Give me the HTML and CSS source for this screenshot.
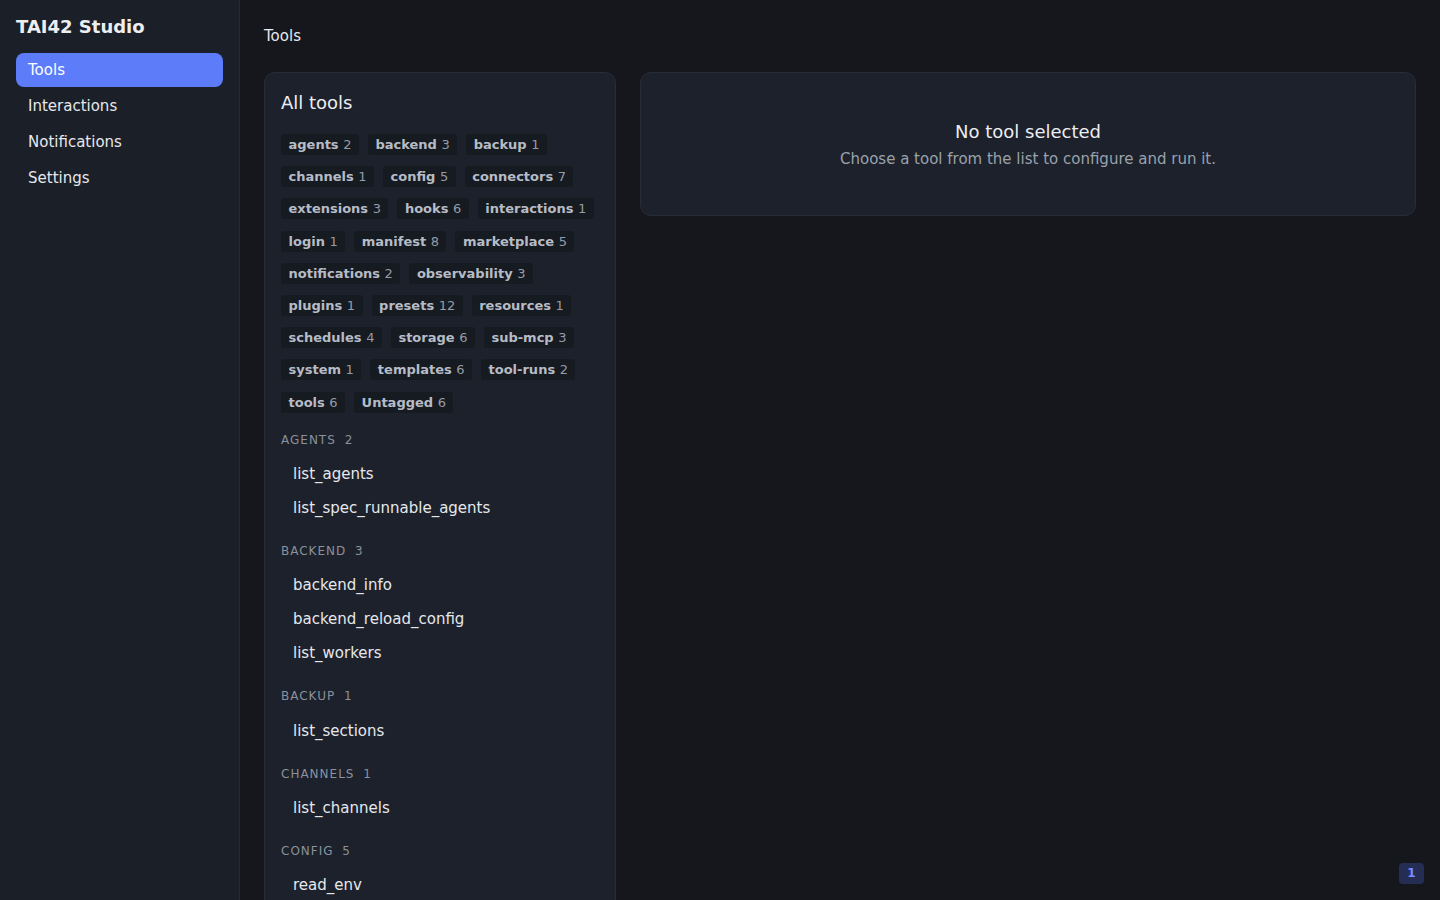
FILE: index.html
```html
<!DOCTYPE html>
<html lang="en">
	<head>
		<meta charset="utf-8"/>
		<meta name="viewport" content="width=device-width, initial-scale=1">
		<link rel="stylesheet" href="styles.css">
		<title>TAI42 Studio - Tools</title>
	</head>
	<body>
		<div class="app">
			<aside class="sidebar">
				<div class="brand">TAI42 Studio</div>
				<nav class="nav">
					<a class="navItem active" href="">Tools</a>
					<a class="navItem" href="">Interactions</a>
					<a class="navItem" href="">Notifications</a>
					<a class="navItem" href="">Settings</a>
				</nav>
			</aside>
			<main class="main">
				<div class="pageTitle">Tools</div>
				<div class="columns">
					<section class="card toolList">
						<h2>All tools</h2>
						<div class="tags">
							<span class="tag">agents <span class="count">2</span></span>
							<span class="tag">backend <span class="count">3</span></span>
							<span class="tag">backup <span class="count">1</span></span>
							<span class="tag">channels <span class="count">1</span></span>
							<span class="tag">config <span class="count">5</span></span>
							<span class="tag">connectors <span class="count">7</span></span>
							<span class="tag">extensions <span class="count">3</span></span>
							<span class="tag">hooks <span class="count">6</span></span>
							<span class="tag">interactions <span class="count">1</span></span>
							<span class="tag">login <span class="count">1</span></span>
							<span class="tag">manifest <span class="count">8</span></span>
							<span class="tag">marketplace <span class="count">5</span></span>
							<span class="tag">notifications <span class="count">2</span></span>
							<span class="tag">observability <span class="count">3</span></span>
							<span class="tag">plugins <span class="count">1</span></span>
							<span class="tag">presets <span class="count">12</span></span>
							<span class="tag">resources <span class="count">1</span></span>
							<span class="tag">schedules <span class="count">4</span></span>
							<span class="tag">storage <span class="count">6</span></span>
							<span class="tag">sub-mcp <span class="count">3</span></span>
							<span class="tag">system <span class="count">1</span></span>
							<span class="tag">templates <span class="count">6</span></span>
							<span class="tag">tool-runs <span class="count">2</span></span>
							<span class="tag">tools <span class="count">6</span></span>
							<span class="tag">Untagged <span class="count">6</span></span>
						</div>

						<div class="group">
							<div class="groupTitle">agents <span class="groupCount">2</span></div>
							<div class="tool">list_agents</div>
							<div class="tool">list_spec_runnable_agents</div>
						</div>
						<div class="group">
							<div class="groupTitle">backend <span class="groupCount">3</span></div>
							<div class="tool">backend_info</div>
							<div class="tool">backend_reload_config</div>
							<div class="tool">list_workers</div>
						</div>
						<div class="group">
							<div class="groupTitle">backup <span class="groupCount">1</span></div>
							<div class="tool">list_sections</div>
						</div>
						<div class="group">
							<div class="groupTitle">channels <span class="groupCount">1</span></div>
							<div class="tool">list_channels</div>
						</div>
						<div class="group">
							<div class="groupTitle">config <span class="groupCount">5</span></div>
							<div class="tool">read_env</div>
							<div class="tool">read_config</div>
							<div class="tool">write_config</div>
							<div class="tool">validate_config</div>
							<div class="tool">list_config_keys</div>
						</div>
					</section>

					<section class="card emptyState">
						<div class="emptyTitle">No tool selected</div>
						<div class="emptyText">Choose a tool from the list to configure and run it.</div>
					</section>
				</div>
			</main>
		</div>
		<div class="badge">1</div>
	</body>
</html>
```

FILE: styles.css
```css
* {
	margin: 0;
	padding: 0;
	box-sizing: border-box;
}
body {
	background-color: #15171d;
	color: #e6e8ec;
	font-family: "DejaVu Sans", Verdana, sans-serif;
	font-size: 15px;
	overflow: hidden;
}
.app {
	display: flex;
	height: 100vh;
}
.sidebar {
	width: 240px;
	flex-shrink: 0;
	padding: 16px 16px;
	background-color: #1b1f27;
	border-right: 1px solid #252932;
}
.brand {
	font-size: 18px;
	font-weight: bold;
	line-height: 22px;
	color: #eceef2;
	margin-bottom: 15px;
}
.nav {
	display: flex;
	flex-direction: column;
	gap: 2px;
}
.navItem {
	display: block;
	height: 34px;
	line-height: 34px;
	padding: 0 12px;
	border-radius: 8px;
	color: #e6e8ec;
	text-decoration: none;
}
.navItem.active {
	background-color: #5c7cfa;
	color: #ffffff;
}
.main {
	flex: 1;
	padding: 25px 24px 24px;
	overflow: hidden;
}
.pageTitle {
	line-height: 22px;
	margin-bottom: 25px;
	color: #e6e8ec;
}
.columns {
	display: flex;
	align-items: flex-start;
	gap: 24px;
}
.card {
	background-color: #1c212b;
	border: 1px solid #272c36;
	border-radius: 11px;
}
.toolList {
	width: 352px;
	flex-shrink: 0;
	padding: 16px;
}
.toolList h2 {
	font-size: 18px;
	font-weight: normal;
	line-height: 27px;
	margin-bottom: 18px;
	color: #eceef2;
}
.tags {
	display: flex;
	flex-wrap: wrap;
	column-gap: 9px;
	row-gap: 11.2px;
}
.tag {
	display: inline-block;
	height: 21px;
	line-height: 21px;
	padding: 0 7.5px;
	border-radius: 3px;
	background-color: #161a21;
	color: #b6bcc6;
	font-size: 13px;
	font-weight: bold;
}
.tag .count {
	font-weight: normal;
	color: #959ca7;
}
.group {
	margin-top: 19px;
}
.group + .group {
	margin-top: 18px;
}
.groupTitle {
	font-size: 12px;
	line-height: 16px;
	letter-spacing: 1px;
	text-transform: uppercase;
	color: #8a919d;
	margin-bottom: 9.4px;
}
.groupCount {
	margin-left: 4px;
}
.tool {
	height: 34px;
	line-height: 34px;
	padding: 0 12px;
	border-radius: 6px;
	color: #e6e8ec;
}
.emptyState {
	flex: 1;
	height: 144px;
	display: flex;
	flex-direction: column;
	align-items: center;
	justify-content: center;
}
.emptyTitle {
	font-size: 18px;
	line-height: 26px;
	color: #eceef2;
	margin-bottom: 3px;
}
.emptyText {
	line-height: 22px;
	color: #9aa1ac;
}
.badge {
	position: fixed;
	right: 16px;
	bottom: 16px;
	width: 25px;
	height: 21px;
	line-height: 21px;
	text-align: center;
	border-radius: 4px;
	background-color: #262d55;
	color: #7c8cff;
	font-size: 12px;
	font-weight: bold;
}
```
